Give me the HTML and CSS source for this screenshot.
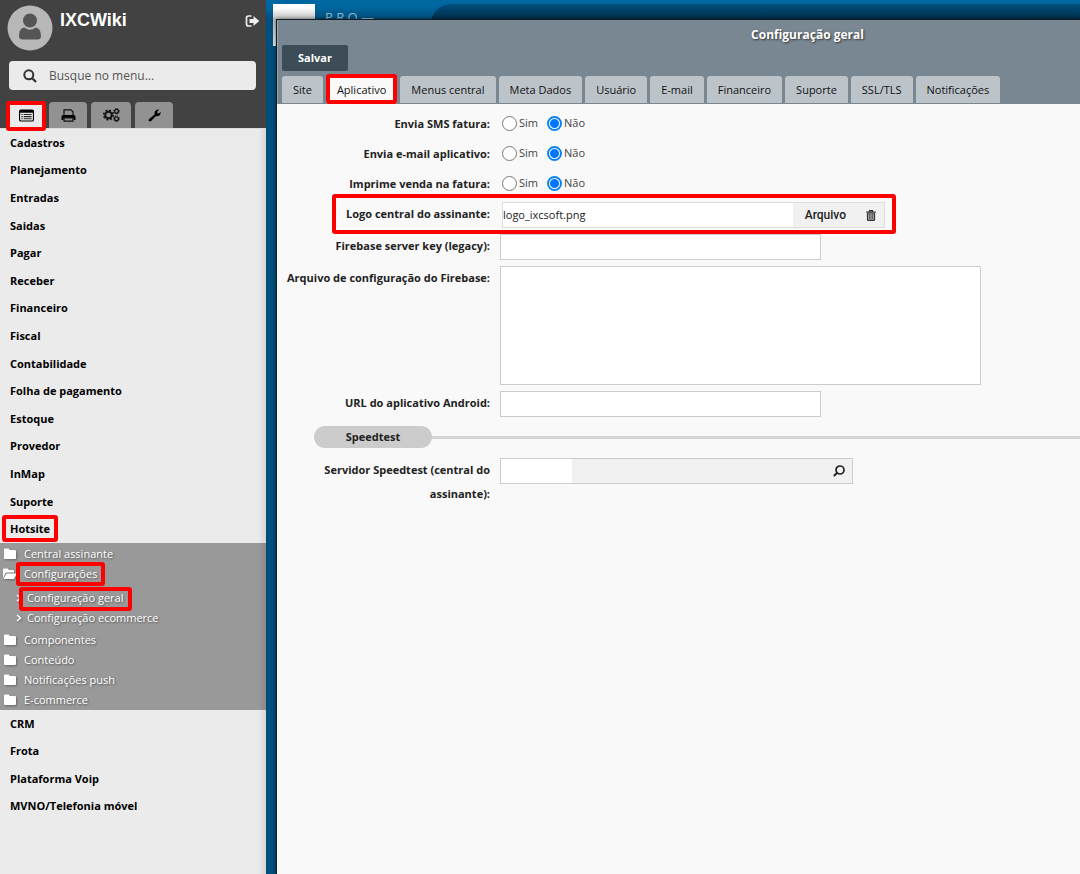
FILE: index.html
```html
<!DOCTYPE html>
<html lang="pt-BR">
<head>
<meta charset="utf-8">
<title>Configuração geral</title>
<link rel="stylesheet" href="styles.css">
</head>
<body>
<svg class="defs" aria-hidden="true">
  <symbol id="folder" viewBox="0 0 14 12"><path d="M1 1.5Q1 .5 2 .5H5.5Q6.5.5 6.5 1.5V2H12Q13 2 13 3V10Q13 11 12 11H2Q1 11 1 10Z"/></symbol>
  <symbol id="folder-open" viewBox="0 0 14 12"><path d="M0 10V1.5Q0 .5 1 .5H4.5Q5.5.5 5.5 1.5V2H10Q11 2 11 3V4.5H4Q3 4.5 2.4 5.2ZM3.3 5.6H13.8L11.2 10.4Q10.8 11 10 11H.5Z"/></symbol>
  <symbol id="chevron" viewBox="0 0 6 8"><path d="M1 1L4.5 4L1 7" fill="none" stroke="#fff" stroke-width="1.5"/></symbol>
</svg>
<aside class="sidebar">
  <header class="sidebar-head">
    <div class="user">
      <svg class="avatar" viewBox="0 0 46 46"><circle cx="23" cy="23" r="22.500" fill="#b8b8b8"/><circle cx="23" cy="15.500" r="7" fill="#555"/><path d="M12 31Q12 23 17.500 22.500Q23 27 28.500 22.500Q34 23 34 31Q34 34.500 30.500 34.500H15.500Q12 34.500 12 31Z" fill="#555"/></svg>
      <strong class="user-name">IXCWiki</strong>
      <button class="logout" type="button" aria-label="Sair"><svg viewBox="0 0 14 12"><path d="M6 1H3Q1 1 1 3V9Q1 11 3 11H6" fill="none" stroke="#eee" stroke-width="1.700"/><path d="M4 4H8V1L13.800 6L8 11V8H4Z" fill="#eee"/></svg></button>
    </div>
    <label class="search"><svg viewBox="0 0 14 14"><circle cx="5.800" cy="5.800" r="4.500" fill="none" stroke="#333" stroke-width="2"/><path d="M9 9L13 13" stroke="#333" stroke-width="2.300"/></svg><input type="text" placeholder="Busque no menu..." aria-label="Busque no menu"></label>
    <nav class="modes">
      <button class="mode mode-on marked" type="button" aria-label="Menu"><svg viewBox="0 0 16 13"><path d="M2 0H14Q16 0 16 2V11Q16 13 14 13H2Q0 13 0 11V2Q0 0 2 0ZM1.200 3.500V11Q1.200 11.800 2 11.800H14Q14.800 11.800 14.800 11V3.500Z" fill-rule="evenodd"/><path d="M2.500 5.500H4M5 5.500H13.500M2.500 7.700H4M5 7.700H13.500M2.500 9.900H4M5 9.900H13.500" stroke="#222" stroke-width="1.100"/></svg></button>
      <button class="mode" type="button" aria-label="Imprimir"><svg viewBox="0 0 14 13"><path d="M2.500 6V.8H9.500L11.500 2.800V6" fill="none" stroke="#111" stroke-width="1.200"/><path d="M0 8Q0 6 2 6H12Q14 6 14 8V11H12V8.800H2V11H0Z"/><path d="M2.500 8.800H11.500V12.200H2.500Z" fill="none" stroke="#111" stroke-width="1.200"/></svg></button>
      <button class="mode mode-wide" type="button" aria-label="Configurações"><svg viewBox="0 0 17 14"><circle cx="5.500" cy="7" r="3.300" fill="none" stroke="#111" stroke-width="2"/><circle cx="5.500" cy="7" r="4.800" fill="none" stroke="#111" stroke-width="1.500" stroke-dasharray="2 1.770"/><circle cx="13.500" cy="3.300" r="1.900" fill="none" stroke="#111" stroke-width="1.300"/><circle cx="13.500" cy="3.300" r="2.800" fill="none" stroke="#111" stroke-dasharray="1.100 1.100"/><circle cx="13.500" cy="10.700" r="1.900" fill="none" stroke="#111" stroke-width="1.300"/><circle cx="13.500" cy="10.700" r="2.800" fill="none" stroke="#111" stroke-dasharray="1.100 1.100"/></svg></button>
      <button class="mode" type="button" aria-label="Ferramentas"><svg viewBox="0 0 14 14"><path d="M1 11L7 5.800Q6.500 2.500 9 1Q10.500.2 12 .8L9.800 3L10.200 4.500L11.800 4.800L13.600 3Q14 5.500 12.200 7Q10.500 8.300 8.600 7.600L3.300 13Q2.200 14 1 13Q0 12 1 11Z"/></svg></button>
    </nav>
  </header>
  <ul class="menu menu-main">
    <li><a href="#">Cadastros</a></li><li><a href="#">Planejamento</a></li><li><a href="#">Entradas</a></li><li><a href="#">Saidas</a></li><li><a href="#">Pagar</a></li><li><a href="#">Receber</a></li><li><a href="#">Financeiro</a></li><li><a href="#">Fiscal</a></li><li><a href="#">Contabilidade</a></li><li><a href="#">Folha de pagamento</a></li><li><a href="#">Estoque</a></li><li><a href="#">Provedor</a></li><li><a href="#">InMap</a></li><li><a href="#">Suporte</a></li><li><a class="marked" href="#">Hotsite</a></li>
  </ul>
  <ul class="submenu">
    <li><svg><use href="#folder"/></svg><a href="#">Central assinante</a></li>
    <li><svg><use href="#folder-open"/></svg><a class="marked" href="#">Configurações</a></li>
    <li class="leaf leaf-first"><svg><use href="#chevron"/></svg><a class="marked" href="#">Configuração geral</a></li>
    <li class="leaf leaf-last"><svg><use href="#chevron"/></svg><a href="#">Configuração ecommerce</a></li>
    <li><svg><use href="#folder"/></svg><a href="#">Componentes</a></li>
    <li><svg><use href="#folder"/></svg><a href="#">Conteúdo</a></li>
    <li><svg><use href="#folder"/></svg><a href="#">Notificações push</a></li>
    <li><svg><use href="#folder"/></svg><a href="#">E-commerce</a></li>
  </ul>
  <ul class="menu menu-more">
    <li><a href="#">CRM</a></li><li><a href="#">Frota</a></li><li><a href="#">Plataforma Voip</a></li><li><a href="#">MVNO/Telefonia móvel</a></li>
  </ul>
</aside>
<main class="desktop">
  <div class="topbar"><span class="brand-tile"></span><span class="brand">P R O —</span><span class="top-pill"></span></div>
  <section class="window">
    <header class="window-head">
      <h1>Configuração geral</h1>
      <button class="save" type="button">Salvar</button>
      <nav class="tabs">
        <button type="button">Site</button><button class="tab-on marked" type="button">Aplicativo</button><button type="button">Menus central</button><button type="button">Meta Dados</button><button type="button">Usuário</button><button type="button">E-mail</button><button type="button">Financeiro</button><button type="button">Suporte</button><button type="button">SSL/TLS</button><button type="button">Notificações</button>
      </nav>
    </header>
    <form class="form">
      <div class="row radios"><span class="label" id="sms">Envia SMS fatura:</span><div class="options" role="radiogroup" aria-labelledby="sms"><label><input type="radio" name="sms">Sim</label><label><input type="radio" name="sms" checked>Não</label></div></div>
      <div class="row radios"><span class="label" id="mail">Envia e-mail aplicativo:</span><div class="options" role="radiogroup" aria-labelledby="mail"><label><input type="radio" name="mail">Sim</label><label><input type="radio" name="mail" checked>Não</label></div></div>
      <div class="row radios"><span class="label" id="venda">Imprime venda na fatura:</span><div class="options" role="radiogroup" aria-labelledby="venda"><label><input type="radio" name="venda">Sim</label><label><input type="radio" name="venda" checked>Não</label></div></div>
      <div class="row logo-row"><label class="label" for="logo">Logo central do assinante:</label>
        <div class="file"><input id="logo" type="text" value="logo_ixcsoft.png"><button type="button">Arquivo</button><button class="trash" type="button" aria-label="Excluir"><svg viewBox="0 0 10 11"><path d="M0 2H10M3.500 1.500V.6H6.500V1.500" fill="none" stroke="#333" stroke-width="1.200"/><path d="M1.500 3V9.500Q1.500 10.400 2.500 10.400H7.500Q8.500 10.400 8.500 9.500V3Z" fill="#aaa" stroke="#333" stroke-width="1.200"/><path d="M3.800 4V9M6.200 4V9" stroke="#444"/></svg></button></div></div>
      <div class="row"><label class="label" for="key">Firebase server key (legacy):</label><input class="box" id="key" type="text"></div>
      <div class="row"><label class="label" for="conf">Arquivo de configuração do Firebase:</label><textarea class="box area" id="conf"></textarea></div>
      <div class="row"><label class="label" for="url">URL do aplicativo Android:</label><input class="box" id="url" type="text"></div>
      <h2 class="divider"><span>Speedtest</span></h2>
      <div class="row"><label class="label label-wrap" for="server">Servidor Speedtest (central do assinante):</label>
        <div class="lookup"><input id="server" type="text"><input class="lookup-name" type="text" readonly aria-label="Nome do servidor"><button type="button" aria-label="Pesquisar"><svg viewBox="0 0 12 12"><circle cx="7" cy="5" r="4" fill="none" stroke="#222" stroke-width="1.700"/><path d="M4.200 7.800L.8 11" stroke="#222" stroke-width="2"/></svg></button></div></div>
    </form>
  </section>
</main>
</body>
</html>
```
FILE: styles.css
```css
*, ::before, ::after { box-sizing: border-box; }
body { margin: 0; min-height: 100vh; display: flex; overflow-x: hidden; font: 11px/20px "Open Sans", "Noto Sans", sans-serif; color: #222; }
button, input, textarea { font: inherit; color: inherit; margin: 0; }
button { border: 0; background: none; padding: 0; }
ul { list-style: none; margin: 0; padding: 0; }
a { color: inherit; text-decoration: none; }
svg { display: block; }
.defs { position: absolute; width: 0; height: 0; }
.marked { position: relative; }
.marked::after { content: ""; position: absolute; inset: -6px -8px; border: 4px solid #f00; border-radius: 3px; pointer-events: none; z-index: 2; }

.sidebar { flex: 0 0 266px; background: linear-gradient(90deg, #ebebeb 97%, #d6d6d6); }
.sidebar-head { display: flex; flex-direction: column; height: 129px; padding: 5px 6px 0 7px; background: #424242; border-bottom: 1px solid #ddd; }
.user { display: flex; align-items: flex-start; }
.avatar { width: 46px; height: 46px; }
.user-name { flex: 1; margin: 5px 7px; font: bold 18px/20px "Liberation Sans", Arial, sans-serif; color: #fff; }
.logout { margin: 10px 0 0; }
.logout svg { width: 15px; height: 12px; }
.search { display: flex; align-items: center; gap: 12px; height: 29px; margin: 10px 4px 0 2px; padding-left: 14px; background: #ebebeb; border-radius: 4px; font-size: 12px; }
.search svg { width: 14px; height: 14px; }
.search input { flex: 1; min-width: 0; border: 0; background: none; padding: 0; }
.search input::placeholder { color: #555; opacity: 1; }
.modes { display: flex; gap: 4px; margin-top: auto; }
.mode { width: 38px; height: 26px; display: grid; place-items: center; background: #929292; border-radius: 4px 4px 0 0; }
.mode svg { width: 15px; height: 13px; }
.mode-wide { width: 40px; }
.mode-wide svg { width: 17px; height: 14px; }
.mode-on { background: #ebebeb; }
.mode-on.marked::after { inset: -1px -1px -3px; }
.menu { display: grid; grid-auto-rows: 1fr; align-items: center; padding-left: 10px; font-weight: 700; color: #000; }
.menu-main { min-height: 414px; }
.menu-more { min-height: 110px; }
.submenu { padding-top: 1px; background: linear-gradient(90deg, #999 97%, #8a8a8a); color: #fff; text-shadow: 1px 1px 2px #555; }
.submenu li { display: flex; align-items: center; gap: 7px; padding-left: 3px; height: 20px; }
.submenu svg { width: 14px; height: 12px; fill: #fff; filter: drop-shadow(1px 1px 1px #666); }
.submenu .leaf { padding-left: 16px; gap: 5px; }
.submenu .leaf svg { width: 6px; height: 8px; }
.submenu .leaf-first { margin-top: 4px; }
.submenu .leaf-last { margin-bottom: 2px; }
.submenu .marked::after { inset: -2px -8px; }
.submenu .leaf .marked::after { inset: -1px -8px -3px; }

.desktop { flex: 1; min-width: 0; position: relative; display: flex; padding: 19px 0 0 10px; background: linear-gradient(90deg, #004a75, #00507f 5px, #004d78 11px); }
.topbar { position: absolute; inset: 0 0 auto; height: 46px; display: flex; padding: 4px 0 0 7px; background: linear-gradient(#0067a1 4px, #00659d 8px, #004d79 20px, #00507f); }
.brand-tile { width: 42px; height: 42px; background: linear-gradient(#fff 4px, #bbb 16px, #e8e8e8); }
.brand { margin-left: 10px; font-size: 13px; line-height: 26px; color: #8fb8d0; }
.top-pill { flex: 1; margin-left: 57px; height: 40px; border-radius: 20px 0 0 20px; background: linear-gradient(#00507f, #002c46 16px); }
.window { flex: 1; min-width: 0; position: relative; background: #f9f9f9; border: solid #111c26; border-width: 1px 0 0 1px; box-shadow: 0 0 4px #0008; }
.window-head { background: #788791; padding: 5px 0 0 4px; border-left: 1px solid #97a4ac; }
.window-head h1 { margin: 0; padding-left: 253px; text-align: center; font-size: 12px; line-height: 20px; font-weight: 700; color: #fff; text-shadow: 1px 1px 2px #333; }
.save { display: block; width: 66px; height: 26px; background: #3d4d57; border-radius: 2px; color: #fff; font-weight: 700; }
.tabs { display: flex; gap: 3px; margin-top: 5px; border-bottom: 1px solid #788791; }
.tabs button { height: 27px; padding: 0 11px; background: #bcc4ca; border-radius: 3px 3px 0 0; white-space: nowrap; color: #111; }
.tabs .tab-on { background: #f9f9f9; }
.tabs .marked::after { inset: -2px 0 -1px; }

.form { display: flex; flex-direction: column; gap: 6px; padding: 4px 0 20px; }
.row { display: grid; grid-template-columns: 213px minmax(0, 1fr); column-gap: 10px; align-items: start; }
.label { text-align: right; font-weight: 700; line-height: 24px; color: #222; }
.label-wrap { padding-left: 34px; }
.radios { height: 24px; }
.radios .label { line-height: 32px; }
.options { display: flex; gap: 9px; padding-left: 2px; }
.options label { display: flex; align-items: center; gap: 2px; line-height: 30px; color: #444; }
.options input { appearance: none; width: 15px; height: 15px; border: 1px solid #777; border-radius: 50%; background: #fff; }
.options input:checked { border: 2px solid #0b84f3; background: radial-gradient(#0075ff 4px, #fff 5px); }
.logo-row { position: relative; margin-top: 4px; }
.logo-row::after { content: ""; position: absolute; left: 55px; top: -8px; width: 564px; height: 40px; border: 4px solid #f00; border-radius: 3px; pointer-events: none; z-index: 1; }
.file { display: flex; width: 383px; max-width: 100%; height: 26px; margin-left: 2px; border: 1px solid #ddd; background: #f1f1f1; }
.file input { flex: 1; min-width: 0; padding: 0; border: 0; background: #fff; }
.file button { padding: 0 12px; font: 500 12px/20px Roboto, sans-serif; color: #222; }
.file .trash { padding: 0 8px; }
.file .trash svg { width: 10px; height: 11px; }
.box { width: 321px; max-width: 100%; height: 26px; border: 1px solid #ccc; background: #fff; }
.area { width: 481px; height: 119px; resize: none; }
.divider { display: flex; align-items: center; margin: 3px 0 4px 37px; font-size: 11px; line-height: 22px; font-weight: 700; }
.divider span { width: 118px; text-align: center; border-radius: 11px; background: #ccc; }
.divider::after { content: ""; flex: 1; height: 3px; background: #d4d4d4; }
.lookup { display: flex; width: 353px; max-width: 100%; height: 26px; border: 1px solid #ccc; background: #f1f1f1; }
.lookup input { width: 71px; border: 0; background: #fff; }
.lookup .lookup-name { flex: 1; min-width: 0; background: none; }
.lookup button { padding: 0 7px; }
.lookup svg { width: 12px; height: 12px; }
```
